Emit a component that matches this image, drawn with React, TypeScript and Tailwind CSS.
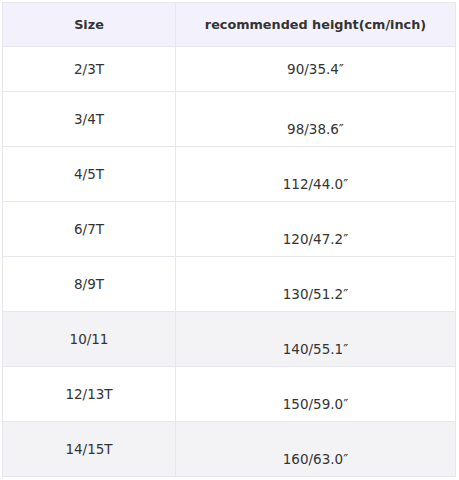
import React from "react";

const rows: { size: string; height: string; shaded?: boolean }[] = [
  { size: "2/3T", height: "90/35.4\u2033" },
  { size: "3/4T", height: "98/38.6\u2033" },
  { size: "4/5T", height: "112/44.0\u2033" },
  { size: "6/7T", height: "120/47.2\u2033" },
  { size: "8/9T", height: "130/51.2\u2033" },
  { size: "10/11", height: "140/55.1\u2033", shaded: true },
  { size: "12/13T", height: "150/59.0\u2033" },
  { size: "14/15T", height: "160/63.0\u2033", shaded: true },
];

export default function App() {
  return (
    <div className="w-[459px] h-[480px] bg-white pl-[2px] pt-[2px] font-['Tahoma','DejaVu_Sans',sans-serif] text-[13.5px] text-[#333]">
      <table className="w-[454px] border-collapse">
        <thead>
          <tr className="h-[44px] bg-[#f3f2fc] text-[12.8px]">
            <th className="w-[173px] border border-[#e6e6ec] font-bold text-center">Size</th>
            <th className="border border-[#e6e6ec] font-bold text-center">recommended height(cm/inch)</th>
          </tr>
        </thead>
        <tbody>
          {rows.map((r, i) => (
            <tr
              key={r.size}
              className={(i === 0 ? "h-[45px] " : "h-[55px] ") + (r.shaded ? "bg-[#f3f3f5]" : "bg-white")}
            >
              <td className="border border-[#e6e6ec] text-center align-middle">{r.size}</td>
              <td
                className={
                  "border border-[#e6e6ec] text-center align-middle " + (i === 0 ? "" : "pt-[20px]")
                }
              >
                {r.height}
              </td>
            </tr>
          ))}
        </tbody>
      </table>
    </div>
  );
}
